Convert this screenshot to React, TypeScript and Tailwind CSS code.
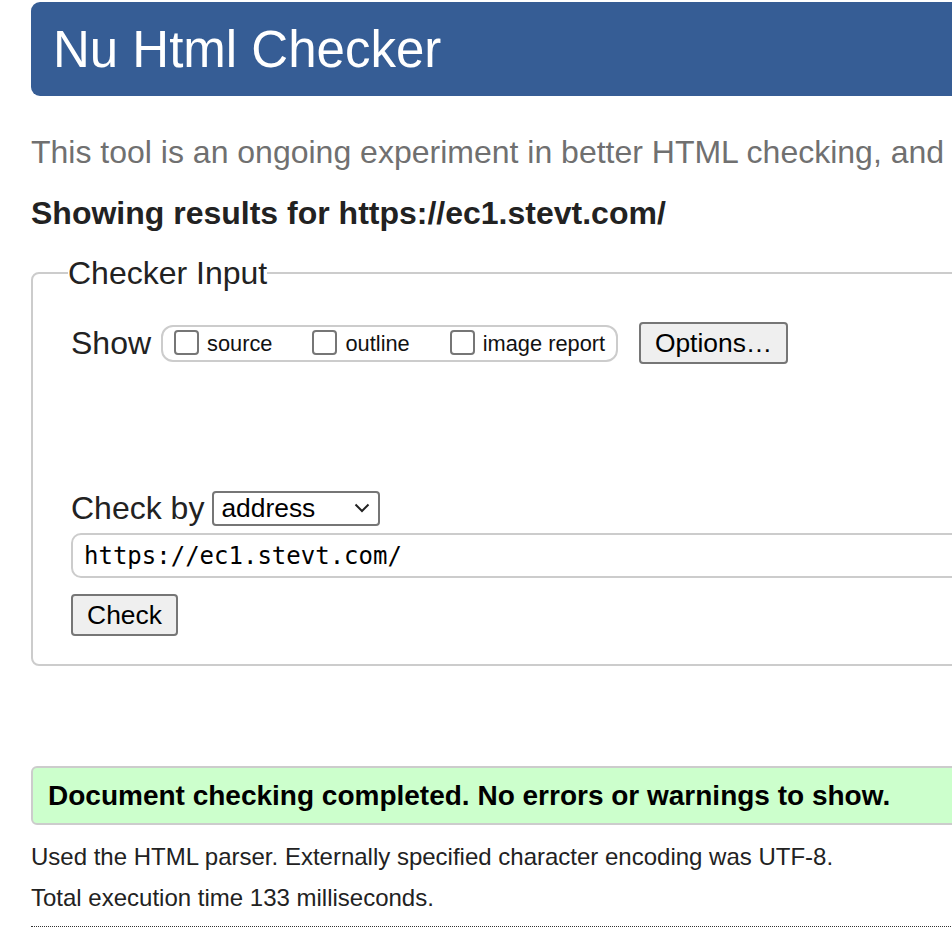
const sans = "font-['Liberation_Sans',Arial,sans-serif]";

function Checkbox({ label }: { label: string }) {
  return (
    <label className="flex shrink-0 items-end gap-[8px] whitespace-nowrap">
      <span className="mb-[2px] block h-[25px] w-[25px] shrink-0 rounded-[4px] border-2 border-[#767676] bg-white" />
      <span className="text-[21.8px] leading-[26px] text-[#111]">{label}</span>
    </label>
  );
}

export default function App() {
  return (
    <div className={`h-[940px] w-[952px] overflow-hidden bg-white ${sans}`}>
      <div className="ml-[31px] w-[1400px]">
        <header className="mt-[2px] flex h-[94px] items-center rounded-[9px] bg-[#365d95] pl-[22px]">
          <h1 className="text-[51px] leading-none text-white">Nu Html Checker</h1>
        </header>

        <p className="mt-[36px] whitespace-nowrap text-[32px] leading-[40px] text-[#707070]">
          This tool is an ongoing experiment in better HTML checking, and
        </p>
        <h2 className="mt-[21px] text-[32px] font-bold leading-[40px] text-[#222]">
          Showing results for https://ec1.stevt.com/
        </h2>

        <fieldset className="mt-[20px] rounded-[8px] border-2 border-[#cccccc] pb-[28px] pl-[38px]">
          <legend className="-ml-[3px] text-[32px] leading-[40px] text-[#222]">Checker Input</legend>

          <div className="mt-[29px] flex h-[42px] items-center">
            <span className="mr-[10px] text-[32px] leading-[40px] text-[#222]">Show</span>
            <div className="flex h-[37px] w-[457px] items-center gap-[40px] rounded-[12px] border-2 border-[#cccccc] px-[11px]">
              <Checkbox label="source" />
              <Checkbox label="outline" />
              <Checkbox label="image report" />
            </div>
            <button className="ml-[21px] h-[42px] w-[149px] rounded-[4px] border-2 border-[#767676] bg-[#efefef] text-[26.4px] text-black">
              Options…
            </button>
          </div>

          <div className="mt-[124px] flex h-[40px] items-center">
            <span className="mr-[8px] text-[32px] leading-[40px] text-[#222]">Check by</span>
            <div className="flex h-[35px] w-[168px] items-center justify-between rounded-[4px] border-2 border-[#767676] pl-[7px] pr-[8px]">
              <span className="text-[26.4px] leading-none text-black">address</span>
              <svg width="16" height="10" viewBox="0 0 16 10" fill="none">
                <path d="M1.5 1.5 L8 8 L14.5 1.5" stroke="#222" strokeWidth="2" />
              </svg>
            </div>
          </div>

          <div className="mt-[5px] flex h-[45px] items-center rounded-[10px] border-2 border-[#cccccc] pl-[11px]">
            <span className="font-['DejaVu_Sans_Mono','Liberation_Mono',monospace] text-[24px] leading-none text-black">
              https://ec1.stevt.com/
            </span>
          </div>

          <button className="mt-[16px] h-[42px] w-[107px] rounded-[4px] border-2 border-[#767676] bg-[#efefef] text-[26.4px] text-black">
            Check
          </button>
        </fieldset>

        <div className="mt-[100px] flex h-[59px] items-center rounded-[6px] border-2 border-[#cccccc] bg-[#ccffcc] pl-[15px]">
          <p className="text-[28px] font-bold leading-none text-black">
            Document checking completed. No errors or warnings to show.
          </p>
        </div>

        <p className="mt-[16px] text-[24px] leading-[32px] text-[#222]">
          Used the HTML parser. Externally specified character encoding was UTF-8.
        </p>
        <p className="mt-[9px] text-[24px] leading-[32px] text-[#222]">Total execution time 133 milliseconds.</p>
        <hr className="mt-[12px] border-0 border-t border-dotted border-[#333]" />
      </div>
    </div>
  );
}
